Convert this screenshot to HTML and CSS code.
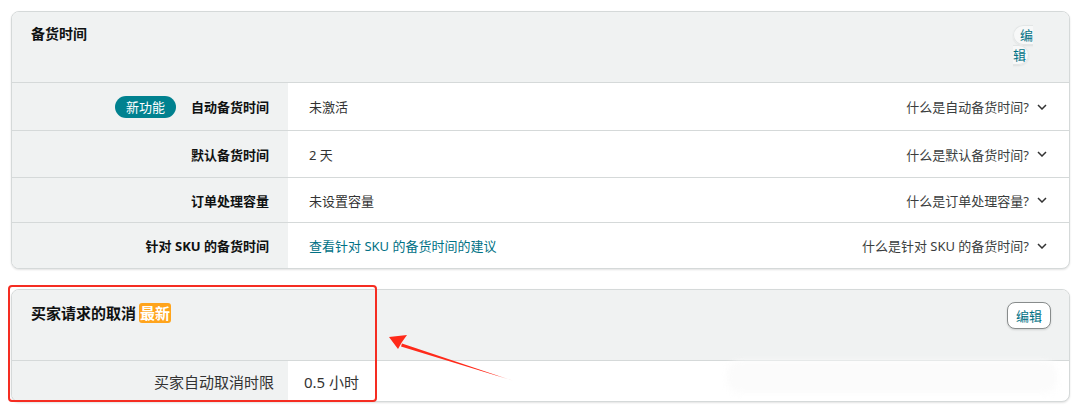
FILE: index.html
```html
<!DOCTYPE html>
<html lang="zh">
<head>
<meta charset="utf-8">
<link rel="stylesheet" href="styles.css">
</head>
<body>
<div class="page">
  <section class="card">
    <div class="card-head">
      <h2 class="title">备货时间</h2>
      <div class="edit-narrow"><span class="edit-wrap">编辑</span></div>
    </div>
    <div class="row r1">
      <div class="label bold"><span class="badge">新功能</span>自动备货时间</div>
      <div class="value">未激活</div>
      <div class="help">什么是自动备货时间?<svg class="chev" viewBox="0 0 10 6"><path d="M1 1l4 4 4-4" fill="none" stroke="#333" stroke-width="1.5"/></svg></div>
    </div>
    <div class="row r2">
      <div class="label bold">默认备货时间</div>
      <div class="value">2 天</div>
      <div class="help">什么是默认备货时间?<svg class="chev" viewBox="0 0 10 6"><path d="M1 1l4 4 4-4" fill="none" stroke="#333" stroke-width="1.5"/></svg></div>
    </div>
    <div class="row r3">
      <div class="label bold">订单处理容量</div>
      <div class="value">未设置容量</div>
      <div class="help">什么是订单处理容量?<svg class="chev" viewBox="0 0 10 6"><path d="M1 1l4 4 4-4" fill="none" stroke="#333" stroke-width="1.5"/></svg></div>
    </div>
    <div class="row r4">
      <div class="label bold">针对 SKU 的备货时间</div>
      <div class="value link">查看针对 SKU 的备货时间的建议</div>
      <div class="help">什么是针对 SKU 的备货时间?<svg class="chev" viewBox="0 0 10 6"><path d="M1 1l4 4 4-4" fill="none" stroke="#333" stroke-width="1.5"/></svg></div>
    </div>
  </section>

  <section class="card card2">
    <div class="card-head head2">
      <h2 class="title t2">买家请求的取消<span class="new">最新</span></h2>
      <button class="edit">编辑</button>
    </div>
    <div class="row row2">
      <div class="label l2">买家自动取消时限</div>
      <div class="value v2">0.5 小时</div>
      <div class="blur"></div>
    </div>
  </section>

  <div class="highlight"></div>
  <svg class="arrow" width="140" height="60" viewBox="0 0 140 60">
    <defs>
      <linearGradient id="g" x1="1" y1="1" x2="0" y2="0">
        <stop offset="0" stop-color="#ff2a1a" stop-opacity="0"/>
        <stop offset="0.15" stop-color="#ff2a1a" stop-opacity="1"/>
        <stop offset="1" stop-color="#ff2a1a"/>
      </linearGradient>
    </defs>
    <path d="M126 49 L14 11.5 L13 14.5 Z" fill="url(#g)"/>
    <path d="M1 5 L19 3 L14 10 L10 17 Z" fill="#ff2a1a"/>
  </svg>
</div>
</body>
</html>
```

FILE: styles.css
```css
* { box-sizing: border-box; }
html, body { margin: 0; background: #fff; }
body {
  font-family: "Noto Sans", "Noto Sans CJK SC", sans-serif;
  color: #0f1111;
}
.page {
  position: relative;
  width: 1080px;
  height: 412px;
  padding: 11px 10px 0 11px;
  display: flex;
  flex-direction: column;
  gap: 20px;
}
.card {
  border: 1px solid #d5d9d9;
  border-radius: 8px;
  overflow: hidden;
  background: #fff;
  box-shadow: 0 1px 2px rgba(15,17,17,0.12);
}
.card-head {
  background: #f0f2f2;
  height: 71px;
  display: flex;
  justify-content: space-between;
  align-items: flex-start;
  padding: 0 18px 0 19px;
  border-bottom: 1px solid #d5d9d9;
}
.title {
  margin: 0;
  padding-top: 12px;
  font-size: 14px;
  font-weight: 700;
  line-height: 20px;
}
.edit-narrow {
  width: 20px;
  margin-top: 13px;
  margin-right: 18px;
  font-size: 13px;
  line-height: 20px;
}
.edit-wrap {
  color: #007185;
  background: #f7f8f8;
  border: 1px solid #e3e6e6;
  border-radius: 10px;
  padding: 0 2px 0 6px;
  box-shadow: 0 1px 2px rgba(15,17,17,0.08);
}
.row {
  display: flex;
  align-items: center;
  border-bottom: 1px solid #d5d9d9;
  font-size: 13px;
}
.row:last-child { border-bottom: 0; }
.r1 { height: 48px; }
.r2 { height: 47px; }
.r3 { height: 45px; }
.r4 { height: 45px; }
.label {
  width: 276px;
  align-self: stretch;
  background: #f0f2f2;
  display: flex;
  align-items: center;
  justify-content: flex-end;
  padding-right: 19px;
}
.bold { font-weight: 700; }
.badge {
  background: #00818f;
  color: #fff;
  font-weight: 400;
  border-radius: 11px;
  padding: 0 11px;
  line-height: 22px;
  height: 22px;
  margin-right: 15px;
}
.value {
  flex: 1;
  padding-left: 21px;
  color: #333;
}
.link { color: #007185; }
.help {
  display: flex;
  align-items: center;
  color: #3a3d3d;
  padding-right: 22px;
}
.chev {
  width: 10px;
  height: 6px;
  margin-left: 8px;
}
.head2 { height: 71px; padding-right: 18px; }
.t2 { font-size: 15px; padding-top: 13px; display: flex; align-items: center; }
.new {
  background: #ffa41c;
  color: #fff;
  font-size: 15px;
  border-radius: 3px;
  padding: 0 1px;
  margin-left: 3px;
  line-height: 20px;
}
.edit {
  margin-top: 12px;
  font-family: inherit;
  font-size: 13px;
  color: #007185;
  background: #fff;
  border: 1px solid #888c8c;
  border-radius: 8px;
  height: 27px;
  width: 44px;
  padding: 0;
  box-shadow: 0 1px 2px rgba(15,17,17,0.15);
}
.row2 { height: 40px; font-size: 15px; position: relative; }
.l2 { padding-right: 14px; color: #333; }
.v2 { padding-left: 16px; }
.blur {
  position: absolute;
  right: 12px;
  top: 0;
  width: 330px;
  height: 32px;
  border-radius: 12px;
  background: #fbfbfb;
  filter: blur(3px);
}
.highlight {
  position: absolute;
  left: 8px;
  top: 285px;
  width: 369px;
  height: 117px;
  border: 2px solid #f52d22;
  border-radius: 4px;
}
.arrow {
  position: absolute;
  left: 388px;
  top: 332px;
}
```
